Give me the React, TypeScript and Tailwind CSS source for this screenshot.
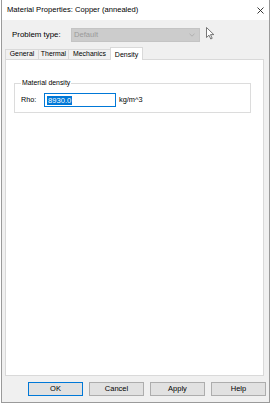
import React from "react";

const font = { fontFamily: '"Liberation Sans", Arial, sans-serif' };

function Tab({ label, w, selected }: { label: string; w: string; selected?: boolean }) {
  if (selected) {
    return (
      <div
        className={`${w} h-[13px] -mb-px bg-white border-t border-l border-r border-[#d9d9d9] flex items-center justify-center text-[7px] leading-none text-black relative z-10`}
      >
        {label}
      </div>
    );
  }
  return (
    <div
      className={`${w} h-[10px] mt-[2px] bg-[#f0f0f0] border-t border-l border-[#d9d9d9] flex items-center justify-center text-[6.9px] leading-none text-black`}
    >
      {label}
    </div>
  );
}

function Btn({ label, focused }: { label: string; focused?: boolean }) {
  return (
    <div
      className={`w-[55px] h-[14px] flex items-center justify-center text-[7.5px] leading-none text-black bg-[#e1e1e1] border ${
        focused ? "border-[#0078d7]" : "border-[#adadad]"
      }`}
    >
      {label}
    </div>
  );
}

export default function App() {
  return (
    <div className="w-[271px] h-[403px] bg-white relative overflow-hidden" style={font}>
      <div className="ml-px w-[269px] h-[403px] border-l border-r border-b border-[#9a9a9a] flex flex-col">
        {/* Title bar */}
        <div className="h-[20px] bg-white flex items-center justify-between pl-[5px] pr-[5px]">
          <span className="text-[7.6px] leading-none text-black">Material Properties: Copper (annealed)</span>
          <svg width="7" height="7" viewBox="0 0 7 7" className="mr-[0px]">
            <path d="M0.5 0.5 L6.5 6.5 M6.5 0.5 L0.5 6.5" stroke="#222" strokeWidth="0.9" />
          </svg>
        </div>
        {/* Body */}
        <div className="flex-1 bg-[#f0f0f0] flex flex-col pl-[3px] pr-[3px]">
          {/* Problem type row */}
          <div className="mt-[8px] flex items-center h-[14px]">
            <span className="ml-[7px] w-[59px] text-[7.9px] leading-none text-black">Problem type:</span>
            <div className="w-[129px] h-[14px] bg-[#cccccc] border border-[#c4c4c4] flex items-center justify-between pl-[2px] pr-[4px]">
              <span className="text-[7.6px] leading-none text-[#9a9a9a]">Default</span>
              <svg width="6" height="4" viewBox="0 0 6 4">
                <path d="M0.5 0.8 L3 3.2 L5.5 0.8" stroke="#a8a8a8" strokeWidth="0.8" fill="none" />
              </svg>
            </div>
          </div>
          {/* Tabs */}
          <div className="mt-[5px] flex items-end h-[12px]">
            <Tab label="General" w="w-[33px]" />
            <Tab label="Thermal" w="w-[30px]" />
            <Tab label="Mechanics" w="w-[42px]" />
            <Tab label="Density" w="w-[33px]" selected />
          </div>
          {/* Panel */}
          <div className="w-[259px] h-[317px] bg-white border border-[#d9d9d9] pt-[19px] pl-[8px]">
            <fieldset className="w-[237px] border border-[#dcdcdc] pl-[6px] pb-[5px]">
              <legend className="ml-[0px] px-[1px] text-[6.9px] leading-[8px] text-black">Material density</legend>
              <div className="mt-[6px] flex items-center h-[14px]">
                <span className="w-[23px] text-[7.2px] leading-none text-black">Rho:</span>
                <div className="w-[72px] h-[14px] bg-white border border-[#0078d7] flex items-center pl-[2px]">
                  <span className="bg-[#0078d7] text-white text-[7.6px] leading-[9px] px-[1px]">8930.0</span>
                </div>
                <span className="ml-[3px] text-[7.4px] leading-none text-black">kg/m^3</span>
              </div>
            </fieldset>
          </div>
          {/* Buttons */}
          <div className="mt-[6px] flex justify-end gap-[6px]">
            <Btn label="OK" focused />
            <Btn label="Cancel" />
            <Btn label="Apply" />
            <Btn label="Help" />
          </div>
        </div>
      </div>
      {/* Mouse cursor */}
      <svg className="absolute left-[206px] top-[27px]" width="9" height="13" viewBox="0 0 9 13">
        <path d="M0.5 0.5 L0.5 10.5 L3 8.2 L4.8 12 L6.2 11.3 L4.5 7.6 L7.8 7.6 Z" fill="#fff" stroke="#555" strokeWidth="0.8" strokeLinejoin="round" />
      </svg>
    </div>
  );
}
